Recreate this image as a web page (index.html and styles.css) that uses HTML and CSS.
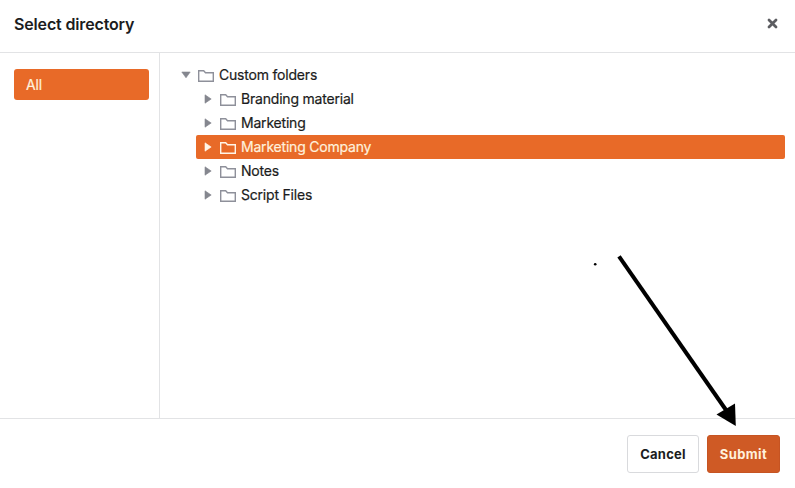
FILE: index.html
```html
<!DOCTYPE html>
<html lang="en">
<head>
<meta charset="utf-8">
<title>Select directory</title>
<link rel="stylesheet" href="styles.css">
</head>
<body>
<svg class="symbols" aria-hidden="true">
  <symbol id="folder" viewBox="0 0 16 12"><path d="M.7 11.3V.7h5l1.8 2h7.8v8.6z" fill="none" stroke="currentColor" stroke-width="1.4"/></symbol>
  <symbol id="closed" viewBox="0 0 8 10"><path d="M1 .8v8.4L7.2 5z" fill="currentColor" stroke="currentColor" stroke-width=".6" stroke-linejoin="round"/></symbol>
  <symbol id="open" viewBox="0 0 10 8"><path d="M.8 1h8.4L5 6.8z" fill="currentColor" stroke="currentColor" stroke-width=".6" stroke-linejoin="round"/></symbol>
</svg>
<div class="dialog">
  <header class="header">
    <h1 class="title">Select directory</h1>
    <button class="close" aria-label="Close"><svg width="11" height="11" viewBox="0 0 11 11"><path d="M2 2l7 7M9 2l-7 7" stroke="currentColor" stroke-width="2.8" stroke-linecap="round"/></svg></button>
  </header>
  <main class="content">
    <nav class="sidebar"><a class="tab"><span>All</span></a></nav>
    <section class="tree">
      <div class="row root"><svg class="caret down"><use href="#open"/></svg><svg class="folder"><use href="#folder"/></svg><span>Custom folders</span></div>
      <div class="children">
        <div class="row"><svg class="caret"><use href="#closed"/></svg><svg class="folder"><use href="#folder"/></svg><span>Branding material</span></div>
        <div class="row"><svg class="caret"><use href="#closed"/></svg><svg class="folder"><use href="#folder"/></svg><span>Marketing</span></div>
        <div class="row selected"><svg class="caret"><use href="#closed"/></svg><svg class="folder"><use href="#folder"/></svg><span>Marketing Company</span></div>
        <div class="row"><svg class="caret"><use href="#closed"/></svg><svg class="folder"><use href="#folder"/></svg><span>Notes</span></div>
        <div class="row"><svg class="caret"><use href="#closed"/></svg><svg class="folder"><use href="#folder"/></svg><span>Script Files</span></div>
      </div>
    </section>
  </main>
  <footer class="footer">
    <button class="button cancel">Cancel</button>
    <button class="button submit">Submit</button>
  </footer>
</div>
<svg class="annotation" width="795" height="488" viewBox="0 0 795 488" aria-hidden="true">
  <circle cx="595.2" cy="264.3" r="1.3"/>
  <path d="M619 256.3L726 410" stroke="#000" stroke-width="4"/>
  <path d="M716.5 414.5L735 403.5L735.8 426z"/>
</svg>
</body>
</html>
```
FILE: styles.css
```css
* { box-sizing: border-box; }
body { margin: 0; background: #fff; color: #1b1c20; font: 14px/24px Inter, "Liberation Sans", sans-serif; }
button { font: inherit; margin: 0; }
.symbols { display: none; }
.dialog { display: flex; flex-direction: column; width: 795px; height: 488px; overflow: hidden; }
.header { display: flex; justify-content: space-between; align-items: center; height: 53px; padding: 0 16px 5px 14px; border-bottom: 1px solid #e2e3e5; }
.title { margin: 0; font-size: 16px; font-weight: 600; letter-spacing: -.15px; }
.close { display: flex; padding: 0; border: 0; background: none; color: #5c5d61; width: 12px; }
.content { display: flex; flex: 1; }
.sidebar { width: 160px; padding: 16px 10px 0 14px; border-right: 1px solid #e2e3e5; }
.tab { display: flex; align-items: center; height: 31px; padding-left: 12px; border-radius: 3px; background: #e86a28; color: #fff1dc; letter-spacing: -.2px; -webkit-text-stroke: .2px; }
.tree { flex: 1; padding: 10px 10px 0 14px; letter-spacing: -.2px; -webkit-text-stroke: .2px; }
.children { padding-left: 22px; }
.row { display: flex; align-items: center; height: 24px; padding-left: 8px; border-radius: 2px; }
.caret { width: 8px; height: 10px; margin-right: 8px; color: #85878f; flex: none; }
.caret.down { width: 10px; height: 8px; margin-right: 7px; }
.root { padding-left: 7px; }
.folder { width: 16px; height: 12px; margin: 2px 5px 0 0; color: #8e909a; flex: none; }
.selected { background: #e86a28; color: #fff1dc; }
.selected .caret, .selected .folder { color: #fff5e8; }
.footer { display: flex; justify-content: flex-end; gap: 8px; height: 70px; padding: 16px 15px 0; border-top: 1px solid #e2e3e5; }
.button { height: 38px; border-radius: 3px; padding: 0; font-size: 13px; font-weight: 700; letter-spacing: .25px; }
.cancel { width: 72px; border: 1px solid #d9dadd; background: #fff; color: #1b1c20; }
.submit { width: 73px; border: 1px solid #c65423; background: #cf5a25; color: #fff1dc; letter-spacing: .4px; }
.annotation { position: absolute; top: 0; left: 0; pointer-events: none; }
```
